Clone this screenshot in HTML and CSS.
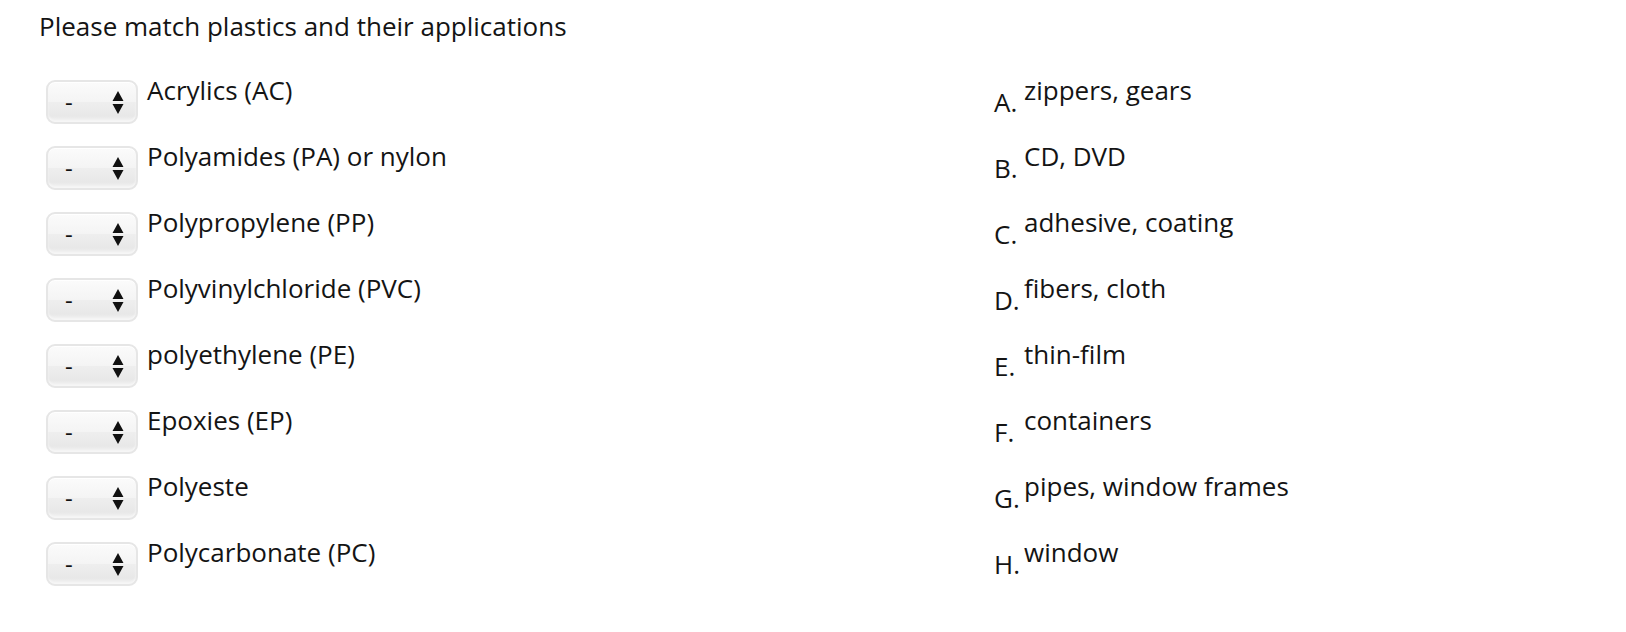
FILE: index.html
```html
<!DOCTYPE html>
<html>
<head>
<meta charset="utf-8">
<link rel="stylesheet" href="styles.css">
</head>
<body>
<div class="page">
  <div class="title">Please match plastics and their applications</div>
  <div class="match">
    <div class="col-left">
      <div class="row"><span class="sel"><select class="select"><option>-</option><option>A</option><option>B</option><option>C</option><option>D</option><option>E</option><option>F</option><option>G</option><option>H</option></select><svg class="arrows" width="12" height="24" viewBox="0 0 12 24"><path d="M6 0 L11.5 10 L0.5 10 Z M0.5 13 L11.5 13 L6 23 Z" fill="#111"/></svg></span><span class="label">Acrylics (AC)</span></div>
      <div class="row"><span class="sel"><select class="select"><option>-</option></select><svg class="arrows" width="12" height="24" viewBox="0 0 12 24"><path d="M6 0 L11.5 10 L0.5 10 Z M0.5 13 L11.5 13 L6 23 Z" fill="#111"/></svg></span><span class="label">Polyamides (PA) or nylon</span></div>
      <div class="row"><span class="sel"><select class="select"><option>-</option></select><svg class="arrows" width="12" height="24" viewBox="0 0 12 24"><path d="M6 0 L11.5 10 L0.5 10 Z M0.5 13 L11.5 13 L6 23 Z" fill="#111"/></svg></span><span class="label">Polypropylene (PP)</span></div>
      <div class="row"><span class="sel"><select class="select"><option>-</option></select><svg class="arrows" width="12" height="24" viewBox="0 0 12 24"><path d="M6 0 L11.5 10 L0.5 10 Z M0.5 13 L11.5 13 L6 23 Z" fill="#111"/></svg></span><span class="label">Polyvinylchloride (PVC)</span></div>
      <div class="row"><span class="sel"><select class="select"><option>-</option></select><svg class="arrows" width="12" height="24" viewBox="0 0 12 24"><path d="M6 0 L11.5 10 L0.5 10 Z M0.5 13 L11.5 13 L6 23 Z" fill="#111"/></svg></span><span class="label">polyethylene (PE)</span></div>
      <div class="row"><span class="sel"><select class="select"><option>-</option></select><svg class="arrows" width="12" height="24" viewBox="0 0 12 24"><path d="M6 0 L11.5 10 L0.5 10 Z M0.5 13 L11.5 13 L6 23 Z" fill="#111"/></svg></span><span class="label">Epoxies (EP)</span></div>
      <div class="row"><span class="sel"><select class="select"><option>-</option></select><svg class="arrows" width="12" height="24" viewBox="0 0 12 24"><path d="M6 0 L11.5 10 L0.5 10 Z M0.5 13 L11.5 13 L6 23 Z" fill="#111"/></svg></span><span class="label">Polyeste</span></div>
      <div class="row"><span class="sel"><select class="select"><option>-</option></select><svg class="arrows" width="12" height="24" viewBox="0 0 12 24"><path d="M6 0 L11.5 10 L0.5 10 Z M0.5 13 L11.5 13 L6 23 Z" fill="#111"/></svg></span><span class="label">Polycarbonate (PC)</span></div>
    </div>
    <div class="col-right">
      <div class="row"><span class="letter">A.</span><span class="answer">zippers, gears</span></div>
      <div class="row"><span class="letter">B.</span><span class="answer">CD, DVD</span></div>
      <div class="row"><span class="letter">C.</span><span class="answer">adhesive, coating</span></div>
      <div class="row"><span class="letter">D.</span><span class="answer">fibers, cloth</span></div>
      <div class="row"><span class="letter">E.</span><span class="answer">thin-film</span></div>
      <div class="row"><span class="letter">F.</span><span class="answer">containers</span></div>
      <div class="row"><span class="letter">G.</span><span class="answer">pipes, window frames</span></div>
      <div class="row"><span class="letter">H.</span><span class="answer">window</span></div>
    </div>
  </div>
</div>
</body>
</html>
```
FILE: styles.css
```css
html, body {
  margin: 0;
  padding: 0;
  background: #ffffff;
}
body {
  font-family: "Open Sans", "Liberation Sans", sans-serif;
  font-size: 26px;
  color: #141414;
  min-height: 632px;
}
.page {
  padding: 8px 0 40px 39px;
}
.title {
  line-height: 36px;
  height: 36px;
}
.match {
  display: flex;
  margin-top: 28px;
}
.col-left {
  display: flex;
  flex-direction: column;
  gap: 30px;
  width: 948px;
  padding-left: 7px;
}
.col-right {
  display: flex;
  flex-direction: column;
  gap: 30px;
}
.row {
  display: flex;
  align-items: flex-start;
  height: 36px;
  line-height: 36px;
}
.sel {
  position: relative;
  display: block;
  width: 92px;
  height: 44px;
  margin-top: 8px;
  flex: none;
}
.select {
  appearance: none;
  -webkit-appearance: none;
  display: block;
  width: 92px;
  height: 44px;
  margin: 0;
  box-sizing: border-box;
  padding: 0 0 0 17px;
  border: 2px solid #e6e6e6;
  border-radius: 9px;
  font-family: "Open Sans", "Liberation Sans", sans-serif;
  font-size: 24px;
  line-height: 40px;
  color: #111;
  background: linear-gradient(to bottom, #fbfbfb 0%, #f4f4f4 50%, #eeeeee 51%, #e8e8e8 85%, #f2f2f2 100%);
  box-shadow: inset 0 1px 0 #ffffff, inset 0 -2px 2px #f6f6f6;
  outline: none;
}
.arrows {
  position: absolute;
  left: 66px;
  top: 11px;
  pointer-events: none;
}
.label {
  margin-left: 9px;
  white-space: nowrap;
}
.letter {
  padding-top: 12px;
  width: 30px;
  flex: none;
}
.answer {
  white-space: nowrap;
}
```
